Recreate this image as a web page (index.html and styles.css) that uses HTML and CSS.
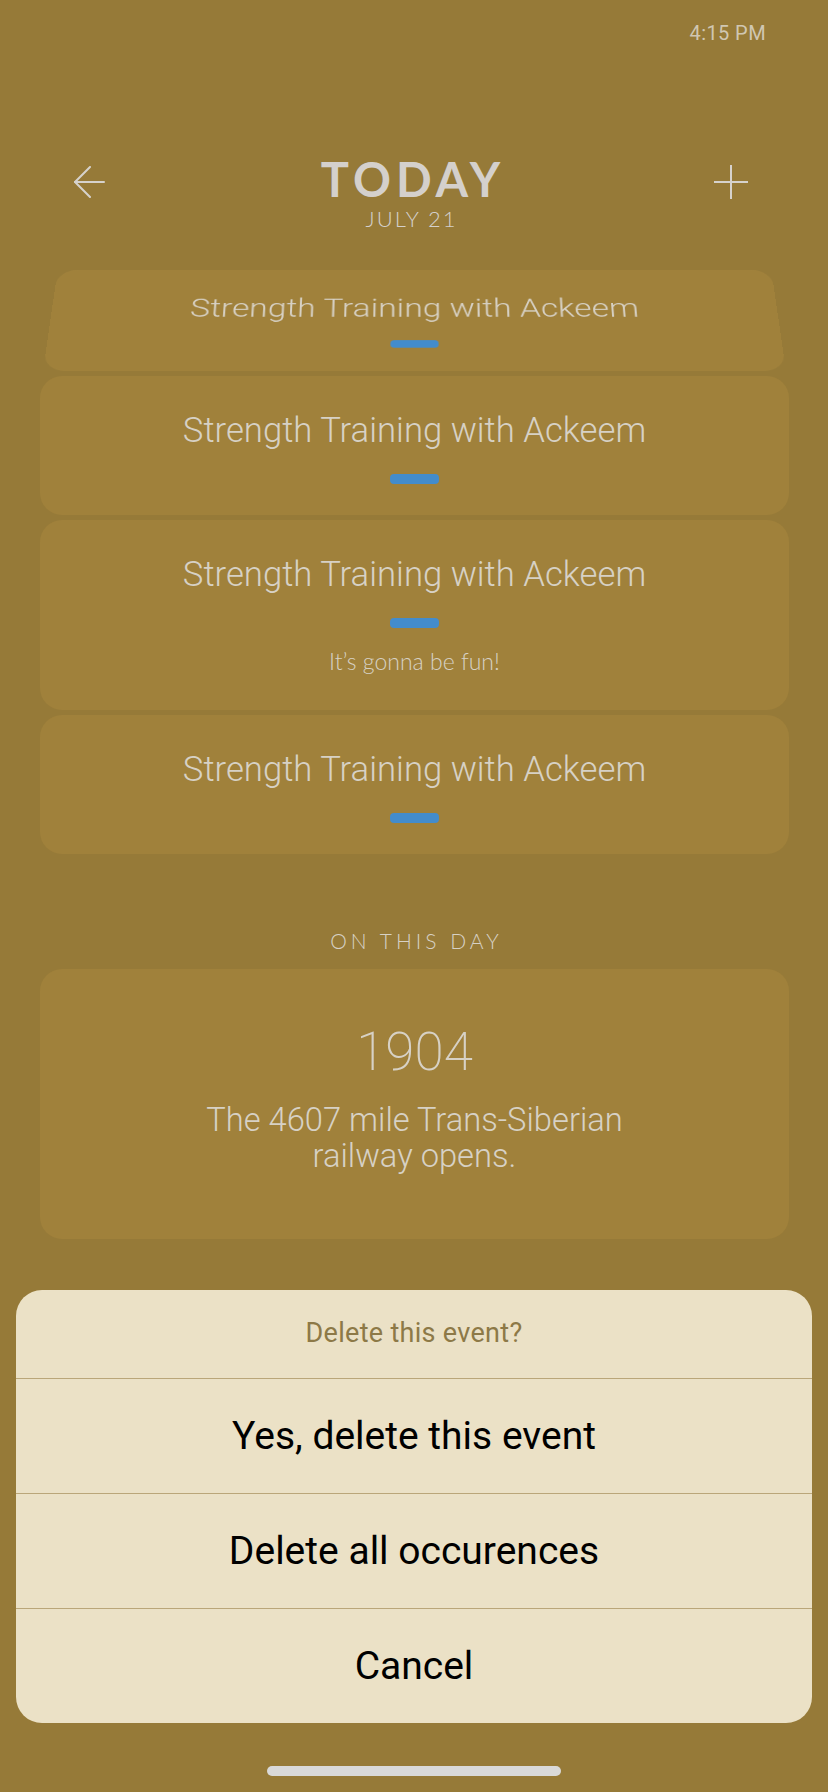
FILE: index.html
```html
<!DOCTYPE html>
<html lang="en">
<head>
<meta charset="utf-8">
<title>Today</title>
<link rel="stylesheet" href="styles.css">
</head>
<body>
<div class="screen">
  <div class="status"><span class="time">4:15 PM</span></div>

  <header class="header">
    <button class="icon-btn back" aria-label="Back">
      <svg width="32" height="32" viewBox="0 0 32 32" fill="none" stroke="currentColor" stroke-width="2" stroke-linecap="round" stroke-linejoin="round">
        <path d="M31 16 H2"/>
        <path d="M17 1 L2 16 L17 31"/>
      </svg>
    </button>
    <div class="title-block">
      <div class="title">TODAY</div>
      <div class="date">JULY 21</div>
    </div>
    <button class="icon-btn add" aria-label="Add">
      <svg width="34" height="34" viewBox="0 0 34 34" fill="none" stroke="currentColor" stroke-width="2">
        <path d="M17 0 V34"/>
        <path d="M0 17 H34"/>
      </svg>
    </button>
  </header>

  <main class="content">
    <div class="events">
      <div class="tilt-wrap">
        <div class="card event tilted">
          <div class="event-title">Strength Training with Ackeem</div>
          <div class="bar"></div>
        </div>
      </div>
      <div class="card event">
        <div class="event-title">Strength Training with Ackeem</div>
        <div class="bar"></div>
      </div>
      <div class="card event">
        <div class="event-title">Strength Training with Ackeem</div>
        <div class="bar"></div>
        <div class="event-note">It’s gonna be fun!</div>
      </div>
      <div class="card event">
        <div class="event-title">Strength Training with Ackeem</div>
        <div class="bar"></div>
      </div>
    </div>

    <div class="section-label">ON THIS DAY</div>
    <div class="card history">
      <div class="year">1904</div>
      <div class="history-text">The 4607 mile Trans-Siberian railway opens.</div>
    </div>
  </main>

  <div class="sheet" role="dialog">
    <div class="sheet-title">Delete this event?</div>
    <button class="sheet-btn">Yes, delete this event</button>
    <button class="sheet-btn">Delete all occurences</button>
    <button class="sheet-btn">Cancel</button>
  </div>

  <div class="home-indicator"></div>
</div>
</body>
</html>
```

FILE: styles.css
```css
* { box-sizing: border-box; }

html, body {
  margin: 0;
  padding: 0;
  background: #967a38;
}

.screen {
  position: relative;
  width: 828px;
  height: 1792px;
  overflow: hidden;
  background: #967a38;
  font-family: Roboto, "Liberation Sans", sans-serif;
  color: #d7d1c5;
}

.status {
  display: flex;
  justify-content: flex-end;
  padding: 21px 62px 0 0;
  height: 45px;
}

.time {
  font-family: Roboto, sans-serif;
  font-size: 20px;
  line-height: 24px;
  color: #d0c7b2;
  letter-spacing: 0.4px;
}

.header {
  display: grid;
  grid-template-columns: 1fr auto 1fr;
  align-items: start;
  margin-top: 111px;
  padding: 0 80px 0 73px;
}

.icon-btn {
  background: none;
  border: 0;
  padding: 0;
  color: #d6d2cc;
  display: flex;
  cursor: pointer;
}

.back {
  justify-self: start;
  margin-top: 10px;
}

.add {
  justify-self: end;
  margin-top: 9px;
}

.title-block {
  text-align: center;
  font-family: Lato, "Noto Sans", sans-serif;
  color: #d4d0cc;
}

.title {
  font-size: 47px;
  line-height: 47px;
  font-weight: 700;
  letter-spacing: 5px;
  margin-right: -5px;
}

.date {
  margin-top: 3px;
  font-size: 22px;
  line-height: 26px;
  font-weight: 300;
  letter-spacing: 2px;
  margin-right: -2px;
}

.content {
  padding: 0 39px 0 40px;
  margin-top: 38px;
}

.events {
  display: flex;
  flex-direction: column;
  gap: 5px;
}

.card {
  background: #a0813b;
  border-radius: 22px;
  text-align: center;
}

.event {
  padding: 33px 20px 31px;
}

.event-title {
  font-size: 34.7px;
  line-height: 42px;
  font-weight: 300;
  color: #d7d1c5;
}

.bar {
  width: 49px;
  height: 10px;
  border-radius: 4px;
  background: #438ccc;
  margin: 23px auto 0;
}

.event-note {
  margin-top: 19px;
  margin-bottom: 4px;
  font-family: Lato, "Noto Sans", sans-serif;
  font-size: 23px;
  line-height: 28px;
  font-weight: 300;
  color: #d7d1c5;
}

.tilt-wrap {
  height: 101px;
}

.tilted {
  margin-top: -38px;
  height: 139px;
  transform-origin: 50% 100%;
  transform: perspective(2150px) rotateX(40deg) scale(0.992);
}

.section-label {
  margin-top: 74px;
  text-align: center;
  font-family: Lato, "Noto Sans", sans-serif;
  font-size: 21px;
  line-height: 25px;
  font-weight: 300;
  letter-spacing: 4px;
  margin-right: -4px;
  color: #d7d1c5;
}

.history {
  margin-top: 16px;
  padding: 53px 40px 65px;
}

.year {
  font-size: 53px;
  line-height: 60px;
  font-weight: 200;
  color: #d7d1c5;
}

.history-text {
  margin: 20px auto 0;
  max-width: 450px;
  font-size: 32.7px;
  line-height: 36px;
  font-weight: 300;
  color: #d7d1c5;
}

.sheet {
  position: absolute;
  left: 16px;
  right: 16px;
  bottom: 69px;
  background: #ebe1c6;
  border-radius: 26px;
  overflow: hidden;
  display: flex;
  flex-direction: column;
}

.sheet-title {
  height: 88px;
  display: flex;
  align-items: center;
  justify-content: center;
  font-size: 27px;
  letter-spacing: 0.3px;
  color: #8d7947;
  padding-bottom: 2px;
}

.sheet-btn {
  height: 115px;
  border: 0;
  border-top: 1px solid #baa679;
  background: transparent;
  font-family: Roboto, "Liberation Sans", sans-serif;
  font-size: 39px;
  color: #000;
  padding: 0;
  cursor: pointer;
}

.home-indicator {
  position: absolute;
  left: 267px;
  bottom: 16px;
  width: 294px;
  height: 10px;
  border-radius: 5px;
  background: #d9d9d9;
}
```
